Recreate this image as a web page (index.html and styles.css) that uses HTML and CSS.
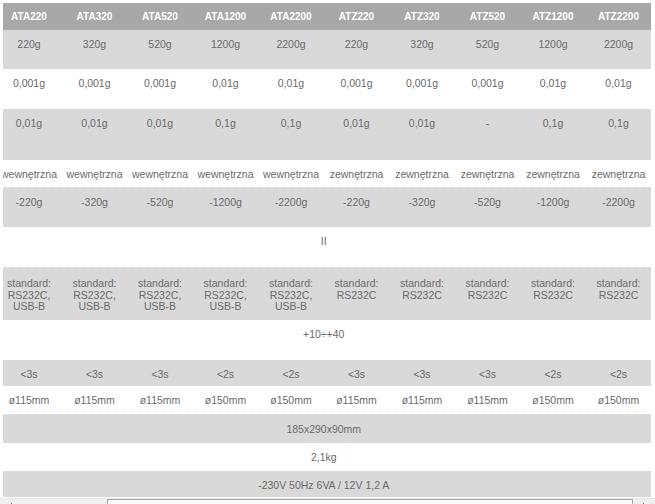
FILE: index.html
```html
<!DOCTYPE html>
<html>
<head>
<meta charset="utf-8">
<link rel="stylesheet" href="styles.css">
</head>
<body>
<div class="wrap">
  <div class="grid">
    <div class="row head h27"><div>ATA220</div><div>ATA320</div><div>ATA520</div><div>ATA1200</div><div>ATA2200</div><div>ATZ220</div><div>ATZ320</div><div>ATZ520</div><div>ATZ1200</div><div>ATZ2200</div></div>
    <div class="row gray h39"><div>220g</div><div>320g</div><div>520g</div><div>1200g</div><div>2200g</div><div>220g</div><div>320g</div><div>520g</div><div>1200g</div><div>2200g</div></div>
    <div class="row white h40"><div>0,001g</div><div>0,001g</div><div>0,001g</div><div>0,01g</div><div>0,01g</div><div>0,001g</div><div>0,001g</div><div>0,001g</div><div>0,01g</div><div>0,01g</div></div>
    <div class="row gray h51"><div>0,01g</div><div>0,01g</div><div>0,01g</div><div>0,1g</div><div>0,1g</div><div>0,01g</div><div>0,01g</div><div>-</div><div>0,1g</div><div>0,1g</div></div>
    <div class="row white h28 dotted"><div>wewnętrzna</div><div>wewnętrzna</div><div>wewnętrzna</div><div>wewnętrzna</div><div>wewnętrzna</div><div>zewnętrzna</div><div>zewnętrzna</div><div>zewnętrzna</div><div>zewnętrzna</div><div>zewnętrzna</div></div>
    <div class="row gray h39"><div>-220g</div><div>-320g</div><div>-520g</div><div>-1200g</div><div>-2200g</div><div>-220g</div><div>-320g</div><div>-520g</div><div>-1200g</div><div>-2200g</div></div>
    <div class="row white h41 dotted"><div class="span">II</div></div>
    <div class="row gray h52 multi"><div>standard: RS232C, USB-B</div><div>standard: RS232C, USB-B</div><div>standard: RS232C, USB-B</div><div>standard: RS232C, USB-B</div><div>standard: RS232C, USB-B</div><div>standard: RS232C</div><div>standard: RS232C</div><div>standard: RS232C</div><div>standard: RS232C</div><div>standard: RS232C</div></div>
    <div class="row white h40"><div class="span">+10÷+40</div></div>
    <div class="row gray h26"><div>&lt;3s</div><div>&lt;3s</div><div>&lt;3s</div><div>&lt;2s</div><div>&lt;2s</div><div>&lt;3s</div><div>&lt;3s</div><div>&lt;3s</div><div>&lt;2s</div><div>&lt;2s</div></div>
    <div class="row white h29 dotted"><div>ø115mm</div><div>ø115mm</div><div>ø115mm</div><div>ø150mm</div><div>ø150mm</div><div>ø115mm</div><div>ø115mm</div><div>ø115mm</div><div>ø150mm</div><div>ø150mm</div></div>
    <div class="row gray h28"><div class="span">185x290x90mm</div></div>
    <div class="row white h28"><div class="span">2,1kg</div></div>
    <div class="row gray h26"><div class="span">-230V 50Hz 6VA / 12V 1,2 A</div></div>
  </div>
</div>
<div class="scrollbar">
  <div class="btn"><span class="arrow left"></span></div>
  <div class="track"><div class="thumb"></div></div>
  <div class="btn"><span class="arrow right"></span></div>
</div>
</body>
</html>
```
FILE: styles.css
```css
html, body {
  margin: 0;
  padding: 0;
  overflow: hidden;
  background: #fff;
}
body {
  font-family: "Liberation Sans", Arial, sans-serif;
  font-size: 10.5px;
  color: #6a6a6a;
}
.wrap {
  margin: 3px 3px 0 3px;
  width: 649px;
  overflow: hidden;
}
.grid {
  width: 655px;
  margin-left: -6.75px;
}
.row {
  display: grid;
  grid-template-columns: repeat(10, 65.5px);
  box-sizing: border-box;
  text-align: center;
  line-height: 12px;
}
.row > div {
  padding-top: 8px;
  white-space: nowrap;
}
.row .span {
  grid-column: 1 / -1;
}
.head {
  background: #a8a8a8;
  color: #fff;
  font-weight: bold;
  font-size: 10px;
}
.head > div { padding-top: 8px; }
.gray { background: #d9d9d9; }
.white { background: #fff; }
.dotted { border-bottom: 1px dotted #c8c8c8; }
.multi > div {
  white-space: normal;
  padding: 10px 6px 0;
  line-height: 11.5px;
}
.h26 { height: 26px; }
.h27 { height: 27px; }
.h28 { height: 28px; }
.h29 { height: 29px; }
.h39 { height: 39px; }
.h40 { height: 40px; }
.h41 { height: 41px; }
.h51 { height: 51px; }
.h52 { height: 52px; }

.scrollbar {
  margin-top: 1px;
  height: 17px;
  display: flex;
  background: #f0f0f0;
  border-top: 1px solid #e6e6e6;
}
.btn {
  width: 20px;
  display: flex;
  justify-content: center;
  padding-top: 4px;
  box-sizing: border-box;
}
.track {
  flex: 1;
  padding-left: 87px;
  padding-right: 2px;
  box-sizing: border-box;
}
.thumb {
  height: 15px;
  border: 1px solid #a8a8a8;
  background: #fafafa;
  box-sizing: border-box;
}
.arrow {
  width: 0;
  height: 0;
  border-top: 4px solid transparent;
  border-bottom: 4px solid transparent;
}
.arrow.left { border-right: 4px solid #333; }
.arrow.right { border-left: 4px solid #333; }
```
